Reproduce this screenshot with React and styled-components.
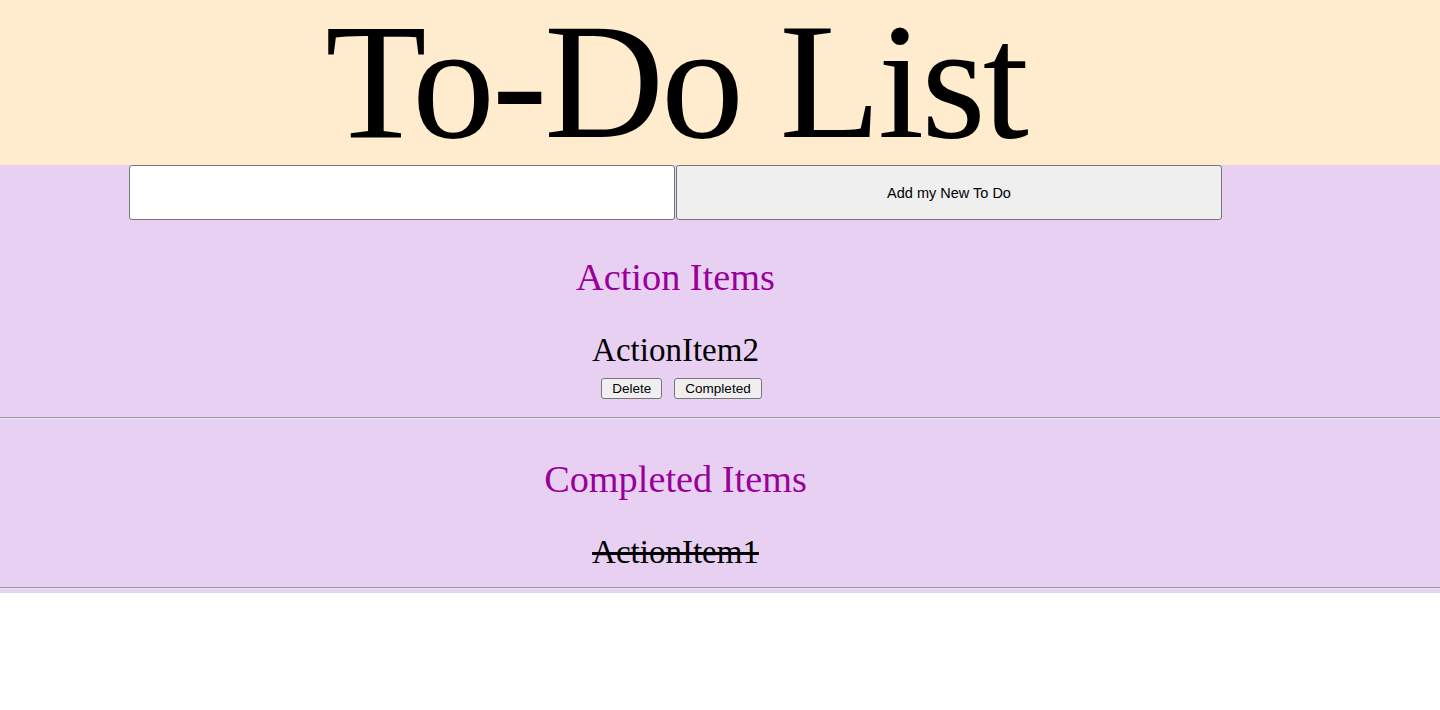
import React, { useState } from 'react';
import styled, { createGlobalStyle } from 'styled-components';

const GlobalStyle = createGlobalStyle`
  body {
    margin: 0;
    background: #fff;
    font-family: "Liberation Serif", "Times New Roman", serif;
  }
`;

const Header = styled.header`
  background-color: #ffebcd;
  height: 165px;
`;

// content column is a bit narrower than the window, so things centre at ~676px
const Inner = styled.div`
  width: 1351px;
  text-align: center;
`;

const Title = styled.h1`
  margin: 0;
  font-size: 166px;
  line-height: 163px;
  font-weight: normal;
  letter-spacing: -3px;
  color: #000;
`;

const Main = styled.main`
  background-color: #e8d0f3;
  padding-bottom: 4px;
`;

const Form = styled.form`
  display: flex;
  justify-content: center;
  height: 55px;
`;

const TextInput = styled.input`
  box-sizing: border-box;
  width: 546px;
  height: 55px;
  margin: 0 1px 0 0;
  background: #fff;
  border: 1px solid #767676;
  border-radius: 3px;
  font-family: "Liberation Sans", Arial, sans-serif;
  font-size: 16px;
  padding: 0 8px;
`;

const AddButton = styled.button`
  box-sizing: border-box;
  width: 546px;
  height: 55px;
  background: #efefef;
  border: 1px solid #767676;
  border-radius: 3px;
  font-family: "Liberation Sans", Arial, sans-serif;
  font-size: 14.5px;
  color: #000;
`;

const SectionTitle = styled.h2`
  margin: ${p => p.$top}px 0 0;
  font-size: 38.3px;
  line-height: 42px;
  font-weight: normal;
  color: #990099;
`;

const ItemText = styled.div`
  margin-top: 34px;
  font-size: 33px;
  line-height: 37px;
  color: #000;
  text-decoration: ${p => (p.$done ? 'line-through' : 'none')};
`;

const ButtonRow = styled.div`
  margin-top: 9px;
  display: flex;
  justify-content: center;
`;

const SmallButton = styled.button`
  box-sizing: border-box;
  height: 21px;
  margin-left: 12px;
  padding: 0 10px;
  background: #efefef;
  border: 1px solid #767676;
  border-radius: 3px;
  font-family: "Liberation Sans", Arial, sans-serif;
  font-size: 13.5px;
  color: #000;
`;

const Rule = styled.hr`
  margin: ${p => p.$top}px 0 0;
  border: 0;
  border-top: 1px solid #9a9a9a;
  border-bottom: 1px solid #eaeaea;
`;

export default function App() {
  const [text, setText] = useState('');
  const actionItems = ['ActionItem2'];
  const completedItems = ['ActionItem1'];

  return (
    <>
      <GlobalStyle />
      <Header>
        <Inner>
          <Title>To-Do List</Title>
        </Inner>
      </Header>
      <Main>
        <Inner>
          <Form onSubmit={e => e.preventDefault()}>
            <TextInput value={text} onChange={e => setText(e.target.value)} />
            <AddButton type="submit">Add my New To Do</AddButton>
          </Form>

          <SectionTitle $top={36}>Action Items</SectionTitle>
          {actionItems.map(item => (
            <div key={item}>
              <ItemText>{item}</ItemText>
              <ButtonRow>
                <SmallButton>Delete</SmallButton>
                <SmallButton>Completed</SmallButton>
              </ButtonRow>
            </div>
          ))}
        </Inner>
        <Rule $top={18} />

        <Inner>
          <SectionTitle $top={39}>Completed Items</SectionTitle>
          {completedItems.map(item => (
            <ItemText key={item} $done>{item}</ItemText>
          ))}
        </Inner>
        <Rule $top={16} />
      </Main>
    </>
  );
}
